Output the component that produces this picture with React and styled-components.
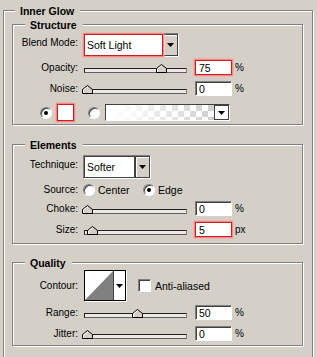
import React from 'react';
import styled, { createGlobalStyle } from 'styled-components';

const Global = createGlobalStyle`
  html, body { margin: 0; padding: 0; background: #d4d0c8; overflow: hidden; }
  body { font-family: "Liberation Sans", Arial, sans-serif; font-size: 10px; color: #000; }
`;

const Page = styled.div`
  box-sizing: border-box;
  height: 357px;
  padding: 10px 0 0 3px;
`;

const Group = styled.div`
  box-sizing: border-box;
  display: flex;
  flex-direction: column;
  width: ${(p) => p.$w}px;
  margin: ${(p) => p.$mt || 0}px 0 0 ${(p) => p.$ml || 0}px;
  padding-bottom: ${(p) => p.$pb || 0}px;
  border: 1px solid #808080;
  box-shadow: inset 1px 1px 0 #fff, 1px 1px 0 #fff;
`;

const Title = styled.div`
  align-self: flex-start;
  margin: -6px 0 0 ${(p) => p.$ml}px;
  padding: 0 6px 0 5px;
  background: #d4d0c8;
  font-weight: bold;
  font-size: 10.5px;
  line-height: 13px;
  white-space: nowrap;
`;

const Row = styled.div`
  display: flex;
  align-items: center;
  height: ${(p) => p.$h}px;
  margin-top: ${(p) => p.$mt || 0}px;
  padding-left: ${(p) => p.$pl || 0}px;
  flex: none;
`;

const Label = styled.div`
  flex: none;
  width: 65px;
  text-align: right;
  white-space: nowrap;
  line-height: 12px;
  margin-bottom: ${(p) => (p.$lift ? 5 : 0)}px;
`;

const glow = '0 0 1px 1px #ef8a8a, 0 0 3px 1px #f6b4b4';

const Select = styled.div`
  display: flex;
  box-sizing: border-box;
  flex: none;
  width: ${(p) => p.$w}px;
  height: 24px;
  margin-left: 5px;
  border: 1px solid;
  border-color: #808080 #fff #fff #808080;
`;

const Field = styled.div`
  flex: 1;
  display: flex;
  align-items: center;
  box-sizing: border-box;
  padding-left: 2px;
  background: #fff;
  line-height: 12px;
  font-size: 10.5px;
  border: 1px solid ${(p) => (p.$hl ? '#d01c1c' : '#404040')};
  box-shadow: ${(p) => (p.$hl ? glow : 'none')};
  ${(p) => (p.$hl ? 'position: relative; z-index: 1;' : '')}
`;

const DropBtn = styled.div`
  flex: none;
  width: 15px;
  box-sizing: border-box;
  display: flex;
  align-items: center;
  justify-content: center;
  background: ${(p) => p.$bg || '#d4d0c8'};
  border: 1px solid #404040;
  box-shadow: inset 1px 1px 0 #fff;
`;

const Arrow = () => (
  <svg width="7" height="4" viewBox="0 0 7 4">
    <polygon points="0,0 7,0 3.5,4" fill="#000" />
  </svg>
);

const SliderWrap = styled.div`
  position: relative;
  flex: none;
  display: flex;
  align-items: flex-end;
  width: 105px;
  height: 15px;
  margin-left: 4px;
`;

const Track = styled.div`
  box-sizing: border-box;
  width: 103px;
  height: 5px;
  margin: 0 0 2px 2px;
  background: #ece9e4;
  border: 1px solid #202020;
  border-right-color: #808080;
  border-bottom-color: #606060;
`;

const ThumbIcon = styled.svg`
  position: absolute;
  bottom: 2px;
`;

const Thumb = ({ left }) => (
  <ThumbIcon width="11" height="9" viewBox="0 0 11 9" style={{ left }}>
    <polygon points="0.5,8.5 0.5,4.5 5.5,0.5 10.5,4.5 10.5,8.5" fill="#d4d0c8" stroke="#000" />
    <polyline points="1.5,8 1.5,5 5.5,1.8" fill="none" stroke="#fff" />
  </ThumbIcon>
);

const Slider = ({ value }) => (
  <SliderWrap>
    <Track />
    <Thumb left={Math.round(value * 99)} />
  </SliderWrap>
);

const NumInput = styled.div`
  flex: none;
  box-sizing: border-box;
  width: 37px;
  height: 15px;
  margin-left: 8px;
  padding-left: 3px;
  display: flex;
  align-items: center;
  background: #fff;
  font-size: 10.5px;
  line-height: 12px;
  border: 1px solid;
  border-color: ${(p) => (p.$hl ? '#d01c1c' : '#808080 #fff #fff #808080')};
  box-shadow: ${(p) => (p.$hl ? glow : 'inset 1px 1px 0 #404040')};
`;

const Unit = styled.span`
  margin-left: 3px;
  line-height: 12px;
`;

const Radio = styled.span`
  flex: none;
  box-sizing: border-box;
  width: 12px;
  height: 12px;
  border-radius: 50%;
  background: #fff;
  border: 1px solid;
  border-color: #808080 #fff #fff #808080;
  box-shadow: inset 1px 1px 0 #404040;
  display: flex;
  align-items: center;
  justify-content: center;
  margin-left: ${(p) => p.$ml || 0}px;
  &::after {
    content: '';
    width: 4px;
    height: 4px;
    border-radius: 50%;
    background: ${(p) => (p.$on ? '#000' : 'transparent')};
  }
`;

const Swatch = styled.span`
  flex: none;
  box-sizing: border-box;
  width: 17px;
  height: 17px;
  margin-left: 5px;
  background: #fff;
  border: 1px solid #d01c1c;
  box-shadow: ${glow};
`;

const GradientSel = styled.div`
  flex: none;
  display: flex;
  box-sizing: border-box;
  width: 125px;
  height: 17px;
  margin-left: 5px;
  border: 1px solid;
  border-color: #404040 #fff #fff #404040;
`;

const GradientFill = styled.div`
  flex: 1;
  background:
    linear-gradient(to right, #fff 0%, rgba(255, 255, 255, 0.85) 25%, rgba(255, 255, 255, 0) 100%),
    repeating-conic-gradient(#cfcfcf 0 25%, #fff 0 50%) 0 0 / 12px 12px;
`;

const Option = styled.div`
  flex: none;
  display: flex;
  align-items: center;
  width: ${(p) => p.$w || 'auto'};
  margin-left: ${(p) => p.$ml || 0}px;
`;

const OptText = styled.span`
  margin-left: ${(p) => p.$ml || 3}px;
  line-height: 12px;
  font-size: 10.5px;
`;

const Contour = styled.div`
  flex: none;
  display: flex;
  box-sizing: border-box;
  width: 42px;
  height: 31px;
  margin-left: 6px;
  border: 1px solid #000;
  box-shadow: 1px 1px 0 #fff;
  background: #fff;
`;

const ContourArrow = styled.div`
  flex: 1;
  display: flex;
  align-items: center;
  justify-content: center;
  border-left: 1px solid #404040;
  background: #fff;
`;

const Check = styled.span`
  flex: none;
  box-sizing: border-box;
  width: 13px;
  height: 13px;
  margin-left: 12px;
  background: #fff;
  border: 1px solid;
  border-color: #808080 #fff #fff #808080;
  box-shadow: inset 1px 1px 0 #404040;
`;

export default function App() {
  return (
    <Page>
      <Global />
      <Group $w={310} $pb={20}>
        <Title $ml={11}>Inner Glow</Title>

        <Group $w={291} $ml={8} $mt={6} $pb={3}>
          <Title $ml={12}>Structure</Title>
          <Row $h={24} $mt={1}>
            <Label $lift>Blend Mode:</Label>
            <Select $w={96}>
              <Field $hl>Soft Light</Field>
              <DropBtn><Arrow /></DropBtn>
            </Select>
          </Row>
          <Row $h={15} $mt={3}>
            <Label>Opacity:</Label>
            <Slider value={0.75} />
            <NumInput $hl>75</NumInput>
            <Unit>%</Unit>
          </Row>
          <Row $h={15} $mt={6}>
            <Label>Noise:</Label>
            <Slider value={0} />
            <NumInput>0</NumInput>
            <Unit>%</Unit>
          </Row>
          <Row $h={17} $mt={8} $pl={27}>
            <Radio $on />
            <Swatch />
            <Radio $ml={14} />
            <GradientSel>
              <GradientFill />
              <DropBtn $bg="#fff"><Arrow /></DropBtn>
            </GradientSel>
          </Row>
        </Group>

        <Group $w={291} $ml={8} $mt={19} $pb={6}>
          <Title $ml={12}>Elements</Title>
          <Row $h={24} $mt={3}>
            <Label $lift>Technique:</Label>
            <Select $w={68}>
              <Field>Softer</Field>
              <DropBtn><Arrow /></DropBtn>
            </Select>
          </Row>
          <Row $h={13} $mt={4}>
            <Label>Source:</Label>
            <Option $w="60px" $ml={5}>
              <Radio />
              <OptText>Center</OptText>
            </Option>
            <Option>
              <Radio $on />
              <OptText>Edge</OptText>
            </Option>
          </Row>
          <Row $h={15} $mt={5}>
            <Label>Choke:</Label>
            <Slider value={0} />
            <NumInput>0</NumInput>
            <Unit>%</Unit>
          </Row>
          <Row $h={15} $mt={6}>
            <Label>Size:</Label>
            <Slider value={0.05} />
            <NumInput $hl>5</NumInput>
            <Unit>px</Unit>
          </Row>
        </Group>

        <Group $w={291} $ml={8} $mt={18} $pb={4}>
          <Title $ml={12}>Quality</Title>
          <Row $h={31} $mt={0}>
            <Label>Contour:</Label>
            <Contour>
              <svg width="28" height="29" viewBox="0 0 28 29">
                <polygon points="0,29 28,0 28,29" fill="#808080" />
              </svg>
              <ContourArrow><Arrow /></ContourArrow>
            </Contour>
            <Check />
            <OptText $ml={4}>Anti-aliased</OptText>
          </Row>
          <Row $h={15} $mt={4}>
            <Label>Range:</Label>
            <Slider value={0.5} />
            <NumInput>50</NumInput>
            <Unit>%</Unit>
          </Row>
          <Row $h={15} $mt={6}>
            <Label>Jitter:</Label>
            <Slider value={0} />
            <NumInput>0</NumInput>
            <Unit>%</Unit>
          </Row>
        </Group>
      </Group>
    </Page>
  );
}
